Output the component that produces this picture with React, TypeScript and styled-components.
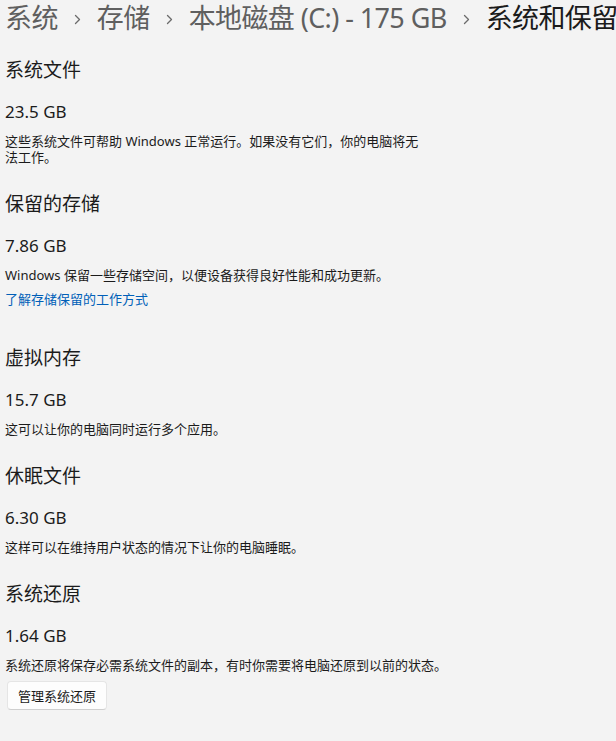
import styled, { createGlobalStyle } from "styled-components";

const GlobalStyle = createGlobalStyle`
  html, body {
    margin: 0;
    padding: 0;
    background: #f3f3f3;
  }
  body {
    font-family: "Noto Sans", "Noto Sans CJK SC", sans-serif;
    color: #1b1b1b;
  }
`;

type Item = {
  title: string;
  size: string;
  desc: string;
  descWidth?: number;
  link?: string;
  button?: string;
};

const items: Item[] = [
  {
    title: "系统文件",
    size: "23.5 GB",
    desc: "这些系统文件可帮助 Windows 正常运行。如果没有它们，你的电脑将无法工作。",
    descWidth: 422,
  },
  {
    title: "保留的存储",
    size: "7.86 GB",
    desc: "Windows 保留一些存储空间，以便设备获得良好性能和成功更新。",
    link: "了解存储保留的工作方式",
  },
  {
    title: "虚拟内存",
    size: "15.7 GB",
    desc: "这可以让你的电脑同时运行多个应用。",
  },
  {
    title: "休眠文件",
    size: "6.30 GB",
    desc: "这样可以在维持用户状态的情况下让你的电脑睡眠。",
  },
  {
    title: "系统还原",
    size: "1.64 GB",
    desc: "系统还原将保存必需系统文件的副本，有时你需要将电脑还原到以前的状态。",
    button: "管理系统还原",
  },
];

const crumbs = ["系统", "存储", "本地磁盘 (C:) - 175 GB", "系统和保留"];

const Chevron = () => (
  <ChevronIcon width="7" height="11" viewBox="0 0 7 11">
    <path d="M1.5 1.5 L5.5 5.5 L1.5 9.5" fill="none" stroke="#6b6b6b" strokeWidth="1.3" strokeLinecap="round" strokeLinejoin="round" />
  </ChevronIcon>
);

export default function App() {
  return (
    <>
      <GlobalStyle />
      <Page>
        <Breadcrumb>
          {crumbs.map((c, i) => (
            <Crumb key={c} $current={i === crumbs.length - 1}>
              {i > 0 && <Chevron />}
              <span>{c}</span>
            </Crumb>
          ))}
        </Breadcrumb>
        <List>
          {items.map((it) => (
            <Section key={it.title}>
              <Title>{it.title}</Title>
              <Size>{it.size}</Size>
              <Desc $width={it.descWidth}>{it.desc}</Desc>
              {it.link && <LearnLink href="#">{it.link}</LearnLink>}
              {it.button && <Button>{it.button}</Button>}
            </Section>
          ))}
        </List>
      </Page>
    </>
  );
}

const Page = styled.div`
  width: 616px;
  height: 741px;
  overflow: hidden;
  padding-left: 5px;
  box-sizing: border-box;
`;

const Breadcrumb = styled.div`
  display: flex;
  align-items: center;
  height: 36px;
  white-space: nowrap;
  font-size: 27px;
  line-height: 36px;
  letter-spacing: -0.6px;
`;

const Crumb = styled.div<{ $current: boolean }>`
  display: flex;
  align-items: center;
  color: ${(p) => (p.$current ? "#1b1b1b" : "#5f5f5f")};
  flex-shrink: 0;
`;

const ChevronIcon = styled.svg`
  margin: 2px 16px 0 16px;
`;

const List = styled.div`
  display: flex;
  flex-direction: column;
  gap: 26px;
  margin-top: 21px;
`;

const Section = styled.div`
  display: flex;
  flex-direction: column;
  align-items: flex-start;
`;

const Title = styled.div`
  font-size: 19px;
  line-height: 26px;
  margin-bottom: 17px;
`;

const Size = styled.div`
  font-size: 17px;
  line-height: 24px;
  margin-bottom: 9px;
`;

const Desc = styled.div<{ $width?: number }>`
  font-size: 13px;
  line-height: 16px;
  max-width: ${(p) => (p.$width ? `${p.$width}px` : "none")};
`;

const LearnLink = styled.a`
  font-size: 13px;
  line-height: 16px;
  color: #005fb8;
  text-decoration: none;
  margin-top: 8px;
  margin-bottom: 12px;
`;

const Button = styled.button`
  margin-top: 8px;
  margin-left: 2px;
  height: 29px;
  padding: 0 10px;
  font-family: inherit;
  font-size: 13px;
  color: #1b1b1b;
  background: #fdfdfd;
  border: 1px solid #e5e5e5;
  border-bottom-color: #cfcfcf;
  border-radius: 4px;
`;
